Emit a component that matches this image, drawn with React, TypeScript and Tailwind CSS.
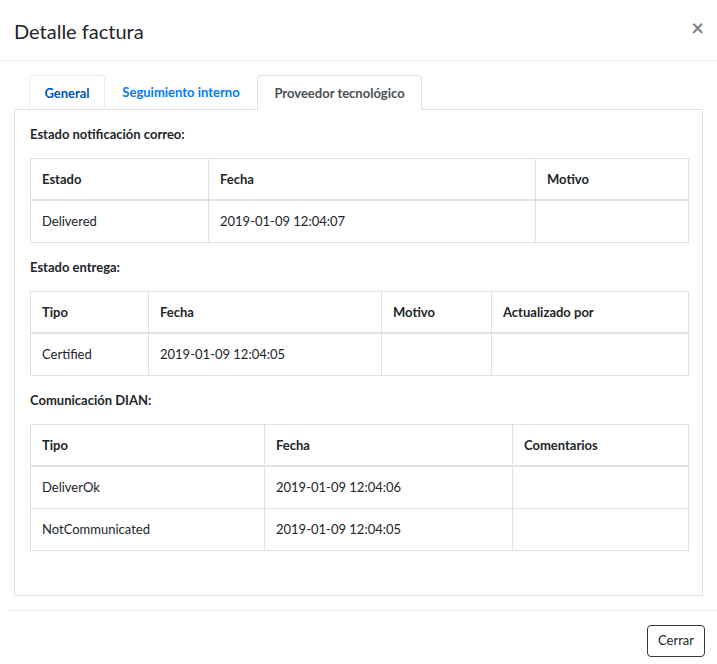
import React from "react";

type Col = { label: string; width: string };

const cellBorder = "border border-[#dee2e6]";

function DataTable({ cols, rows }: { cols: Col[]; rows: string[][] }) {
  return (
    <table className="w-full table-fixed border-collapse text-[13px]">
      <colgroup>
        {cols.map((c) => (
          <col key={c.label} className={c.width} />
        ))}
      </colgroup>
      <thead>
        <tr>
          {cols.map((c) => (
            <th
              key={c.label}
              className={`${cellBorder} border-b-2 px-[11px] py-[11px] leading-[18px] text-left font-bold`}
            >
              {c.label}
            </th>
          ))}
        </tr>
      </thead>
      <tbody>
        {rows.map((r, i) => (
          <tr key={i}>
            {r.map((v, j) => (
              <td key={j} className={`${cellBorder} px-[11px] py-[11px] leading-[19px]`}>
                {v || "\u00a0"}
              </td>
            ))}
          </tr>
        ))}
      </tbody>
    </table>
  );
}

function SectionTitle({ children }: { children: React.ReactNode }) {
  return <div className="mt-[15px] mb-[15px] text-[13px] leading-[18px] font-bold">{children}</div>;
}

export default function App() {
  return (
    <div className="w-[717px] h-[664px] bg-white text-[#212529] font-['Lato',sans-serif] overflow-hidden">
      {/* header */}
      <div className="h-[61px] border-b border-[#e9ecef] flex items-center justify-between pl-[14px] pr-[13px] pt-[2px]">
        <h5 className="text-[20px] leading-[30px] font-normal">Detalle factura</h5>
        <button className="text-[22px] leading-none font-bold text-black/50 -mt-[6px]">×</button>
      </div>

      {/* body */}
      <div className="px-[14px] pt-[14px]">
        <div className="flex pl-[15px] text-[13px] font-bold leading-[18px]">
          <div className="w-[76px] h-[34px] flex items-center justify-center border border-b-0 border-[#e9ecef] rounded-t-[4px] text-[#0056b3]">
            General
          </div>
          <div className="w-[152px] h-[34px] flex items-center justify-center text-[#007bff]">
            Seguimiento interno
          </div>
          <div className="w-[165px] h-[35px] -mb-px relative z-10 flex items-center justify-center border border-b-0 border-[#dee2e6] rounded-t-[4px] bg-white text-[#495057]">
            Proveedor tecnológico
          </div>
        </div>

        <div className="h-[487px] border border-[#dee2e6] px-[15px] pr-[13px]">
          <SectionTitle>Estado notificación correo:</SectionTitle>
          <DataTable
            cols={[
              { label: "Estado", width: "w-[178px]" },
              { label: "Fecha", width: "w-[327px]" },
              { label: "Motivo", width: "w-auto" },
            ]}
            rows={[["Delivered", "2019-01-09 12:04:07", ""]]}
          />

          <SectionTitle>Estado entrega:</SectionTitle>
          <DataTable
            cols={[
              { label: "Tipo", width: "w-[118px]" },
              { label: "Fecha", width: "w-[233px]" },
              { label: "Motivo", width: "w-[110px]" },
              { label: "Actualizado por", width: "w-auto" },
            ]}
            rows={[["Certified", "2019-01-09 12:04:05", "", ""]]}
          />

          <SectionTitle>Comunicación DIAN:</SectionTitle>
          <DataTable
            cols={[
              { label: "Tipo", width: "w-[234px]" },
              { label: "Fecha", width: "w-[248px]" },
              { label: "Comentarios", width: "w-auto" },
            ]}
            rows={[
              ["DeliverOk", "2019-01-09 12:04:06", ""],
              ["NotCommunicated", "2019-01-09 12:04:05", ""],
            ]}
          />
        </div>
      </div>

      {/* footer */}
      <div className="mt-[14px] ml-[8px] border-t border-[#e9ecef] flex justify-end pt-[14px] pr-[12px]">
        <button className="h-[32px] px-[10px] border border-[#343a40] rounded-[4px] text-[13px] text-[#212529]">
          Cerrar
        </button>
      </div>
    </div>
  );
}
